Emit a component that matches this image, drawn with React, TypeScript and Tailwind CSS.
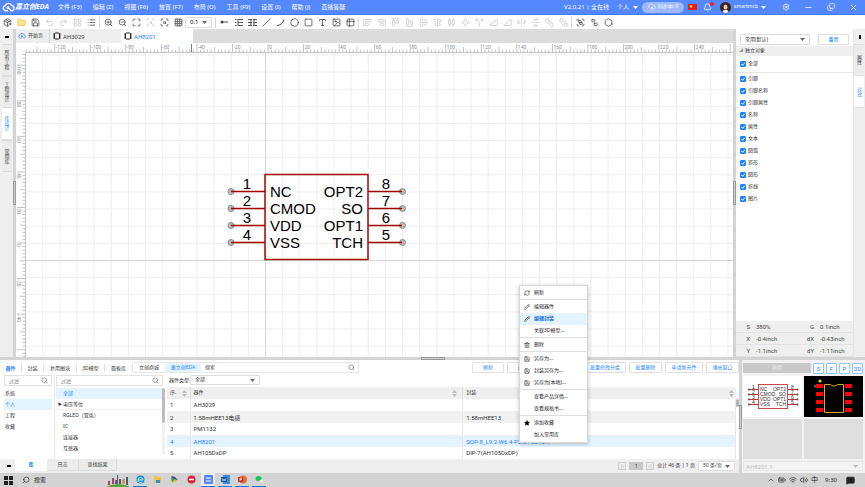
import React from "react";
import {
  AlignCenterHorizontal, AlignCenterVertical, AlignEndHorizontal, AlignEndVertical, AlignHorizontalDistributeCenter,
  AlignStartHorizontal, AlignStartVertical, BatteryFull, Bell, BringToFront, ChevronUp, Circle,
  CloudUpload, Component, Copy, FlipHorizontal2, FlipVertical2, Folder, Grid3x3, Group, Hexagon, Image as ImageIcon,
  LayoutGrid, List, Maximize, MessageSquareText, Minus, PackagePlus, Pencil, Redo2, RefreshCw, Save, ScanSearch, Search,
  SendToBack, Settings, Slash, Split, Square, Star, Table2, Trash2, TriangleRight, Type, Undo2, Ungroup,
  Volume2, Wifi, X, ZoomIn, ZoomOut,
} from "lucide-react";

type IconType = React.ComponentType<{ size?: number; strokeWidth?: number; className?: string }>;

const uiFont = "font-['Noto_Sans','Noto_Sans_CJK_SC',sans-serif]";
const latin = "font-['Roboto','Noto_Sans_CJK_SC',sans-serif] text-[6px]";

function PinIcon() {
  return (
    <svg width="8" height="8" viewBox="0 0 8 8" aria-hidden="true">
      <circle cx="2" cy="4" r="1.5" fill="#444" />
      <path d="M2 4h6" stroke="#444" />
    </svg>
  );
}

function PinRows() {
  return (
    <svg width="9" height="9" viewBox="0 0 9 9" aria-hidden="true">
      <path d="M1 1.5h1.5M1 4.5h1.5M1 7.5h1.5M4 1.5h5M4 4.5h5M4 7.5h5M4 1v7" stroke="#555" />
    </svg>
  );
}

function PinCols() {
  return (
    <svg width="9" height="9" viewBox="0 0 9 9" aria-hidden="true">
      <path d="M0 1.5h4M0 4.5h4M0 7.5h4M5 1.5h4M5 4.5h4M5 7.5h4M3 1v7M6 1v7" stroke="#555" />
    </svg>
  );
}

function ArcIcon() {
  return (
    <svg width="9" height="9" viewBox="0 0 9 9" aria-hidden="true">
      <path d="M1 7.5Q6.500 7 8 1.500" stroke="#444" fill="none" />
    </svg>
  );
}

function ChipIcon() {
  return (
    <svg width="8" height="8" viewBox="0 0 8 8" aria-hidden="true">
      <rect x="1.500" y="1" width="5" height="6" rx="1" fill="none" stroke="#222" />
      <path d="M0 2h1.500M0 4h1.500M0 6h1.500M6.500 2H8M6.500 4H8M6.500 6H8" stroke="#222" strokeWidth=".8" />
    </svg>
  );
}

function CloudLogo({ size, color }: { size: number; color: string }) {
  return (
    <svg width={size} height={size} viewBox="0 0 12 12" fill="none" stroke={color} strokeWidth="1.300" strokeLinecap="round" aria-hidden="true">
      <path d="M5 9H3.200A2.400 2.400 0 0 1 3 4.300 3.200 3.200 0 0 1 9 4.200 2.500 2.500 0 0 1 9.500 9H8.500L6 6.500" />
      <circle cx="5.500" cy="6.200" r=".7" />
    </svg>
  );
}

function Caret({ className = "" }: { className?: string }) {
  return (
    <svg width="5" height="3" viewBox="0 0 5 3" className={className} aria-hidden="true">
      <path d="M0 0h5L2.500 3z" fill="currentColor" />
    </svg>
  );
}

function Tool({ icon: Icon, label, className = "text-[#444]" }: { icon: IconType; label: string; className?: string }) {
  return (
    <button aria-label={label} className={`flex h-[14px] w-[14px] shrink-0 items-center justify-center ${className}`}>
      <Icon size={9} strokeWidth={2} />
    </button>
  );
}

function Picker({ label, value, className }: { label: string; value: string; className: string }) {
  return (
    <span className={`relative flex items-center rounded-[1px] border border-[#dcdcdc] bg-white ${className}`}>
      <select aria-label={label} className="h-full w-full appearance-none bg-transparent pl-1 outline-none">
        <option>{value}</option>
      </select>
      <Caret className="pointer-events-none absolute right-1 text-[#666]" />
    </span>
  );
}

const menus = ["文件 (F3)", "编辑 (Z)", "视图 (F6)", "放置 (F7)", "布局 (O)", "工具 (F9)", "设置 (I)", "帮助 (J)", "直播答疑"];

function TitleBar() {
  return (
    <header className="flex h-[15px] shrink-0 items-center border-b border-[#4377ee] bg-[#5588ff] text-[6px] text-white">
      <div className="flex w-[53px] items-center pl-[2px]">
        <CloudLogo size={13} color="#fff" />
        <span className="text-[7px] font-bold italic">嘉立创EDA</span>
      </div>
      <nav className="ml-[5px] flex gap-[11px]">
        {menus.map((m) => <button key={m}>{m}</button>)}
      </nav>
      <div className="ml-auto flex items-center">
        <span>V2.0.21 | 全在线</span>
        <button className="ml-2 flex items-center gap-1">个人 <Caret /></button>
        <button className="ml-1 flex h-[11px] w-[42px] items-center justify-center gap-[2px] rounded-full bg-[#9dbaff] text-[5px]">
          <CloudUpload size={8} /> 同步中: 0
        </button>
        <span className="ml-1 flex h-[6px] w-[9px] items-start bg-[#e02020] pl-px text-[4px] leading-[5px] text-[#ffde00]">★</span>
        <button aria-label="通知" className="relative ml-[6px]">
          <Bell size={9} />
          <span className="absolute -top-px right-[-2px] h-[4px] w-[4px] rounded-full bg-[#ff1a1a]" />
        </button>
        <svg width="11" height="11" viewBox="0 0 11 11" className="ml-2" aria-hidden="true">
          <circle cx="5.500" cy="5.500" r="5.500" fill="#3a2522" />
          <ellipse cx="5.500" cy="5" rx="2" ry="2.500" fill="#f3c9ae" />
          <path d="M2.500 10c0-3 6-3 6 0a5.500 5.500 0 0 1-6 0z" fill="#f4f4f4" />
          <path d="M3 4c1-2 4-2 5 0L7 2.500H4z" fill="#3a2522" />
        </svg>
        <button className="ml-[3px] flex items-center gap-[3px]"><span className="text-[5px]">smartmcb</span> <Caret /></button>
        <button aria-label="设置" className="ml-4"><Settings size={8} /></button>
        <button aria-label="最小化" className="ml-[14px]"><Minus size={9} /></button>
        <button aria-label="还原" className="ml-[14px]"><Copy size={8} className="-scale-x-100 rotate-180" /></button>
        <button aria-label="关闭" className="mr-[7px] ml-[14px]"><X size={9} /></button>
      </div>
    </header>
  );
}

const Rule = () => <span className="mx-[1px] h-[11px] w-px shrink-0 bg-[#d8d8d8]" />;

function Toolbar() {
  const off = "text-[#c4c4c4]";
  const aligners: [IconType, string][] = [
    [AlignStartVertical, "左对齐"], [AlignEndVertical, "右对齐"], [AlignStartHorizontal, "顶部对齐"], [AlignEndHorizontal, "底部对齐"],
    [AlignCenterHorizontal, "水平居中"], [AlignCenterVertical, "垂直居中"], [AlignHorizontalDistributeCenter, "水平分布"],
    [Component, "等距分布"], [Split, "网格分布"], [TriangleRight, "左旋转"], [TriangleRight, "右旋转"],
    [FlipHorizontal2, "水平翻转"], [FlipVertical2, "垂直翻转"], [BringToFront, "置于顶层"], [SendToBack, "置于底层"],
  ];
  return (
    <div className="flex h-[14px] shrink-0 items-center bg-white" role="toolbar">
      <Tool icon={PackagePlus} label="新建" />
      <button aria-label="打开" className="flex w-[14px] justify-center"><Folder size={9} className="fill-[#ffe58a] text-[#e8c04a]" /></button>
      <Tool icon={Save} label="保存" />
      <Tool icon={Undo2} label="撤销" className={off} />
      <Tool icon={Redo2} label="重做" className={off} />
      <Tool icon={LayoutGrid} label="阵列" className={off} />
      <Tool icon={List} label="查找" />
      <Rule />
      <Tool icon={ZoomIn} label="放大" />
      <Tool icon={ZoomOut} label="缩小" />
      <Tool icon={Maximize} label="适合全部" />
      <Tool icon={ScanSearch} label="适合选中" className={off} />
      <Tool icon={ScanSearch} label="适合区域" />
      <Tool icon={Grid3x3} label="网格" />
      <Picker label="网格尺寸" value="0.1" className="h-[11px] w-[27px] text-[6px]" />
      <span className="w-[2px]" />
      <Rule />
      <Tool icon={PinIcon} label="引脚" />
      <Tool icon={PinRows} label="引脚列表" />
      <Tool icon={PinCols} label="引脚阵列" />
      <Tool icon={Slash} label="折线" />
      <Tool icon={ArcIcon} label="圆弧" />
      <Tool icon={Circle} label="圆形" />
      <Tool icon={Square} label="矩形" />
      <Tool icon={Type} label="文本" />
      <Tool icon={ImageIcon} label="图片" />
      <Tool icon={Table2} label="表格" />
      <Rule />
      {aligners.map(([icon, label]) => <Tool key={label} icon={icon} label={label} className={off} />)}
      <Rule />
      <Tool icon={Group} label="符号向导" />
      <Tool icon={Ungroup} label="检查" />
      <Tool icon={Hexagon} label="设置" />
    </div>
  );
}

function SideTabs({ tabs, active }: { tabs: string[]; active: string }) {
  return (
    <div className="flex w-[10px] flex-col">
      {tabs.map((t) => (
        <button
          key={t}
          className={`flex h-8 w-[10px] items-center justify-center border-b border-[#dcdcdc] text-[5px] leading-[10px] [writing-mode:vertical-rl] ${t === active ? "bg-white text-[#1a85ff]" : "border-x bg-[#ececec] text-[#333]"}`}
        >
          {t}
        </button>
      ))}
    </div>
  );
}

function Splitter() {
  return (
    <div className="flex w-[3px] shrink-0 items-center bg-[#d4d4d4]">
      <button aria-label="折叠" className="h-[24px] w-[3px] border border-[#999] bg-[#d8d0d0]" />
    </div>
  );
}

const step = 35.55;
const pins = [
  { y: 191, l: "NC", r: "OPT2", a: "1", b: "8" },
  { y: 208, l: "CMOD", r: "SO", a: "2", b: "7" },
  { y: 225, l: "VDD", r: "OPT1", a: "3", b: "6" },
  { y: 242, l: "VSS", r: "TCH", a: "4", b: "5" },
];

function Canvas() {
  const xs = Array.from({ length: 220 }, (_, i) => i - 68);
  const ys = Array.from({ length: 130 }, (_, i) => i - 60);
  return (
    <svg className="block h-full w-full bg-white" role="img" aria-label="AH8201 符号">
      <defs>
        <pattern id="grid" x="265" y="260" width="17.130" height="17.130" patternUnits="userSpaceOnUse">
          <path d="M.5 0V17.130M0 .5H17.130" stroke="#eeeeee" />
        </pattern>
      </defs>
      <g transform="translate(-16 -43)">
        <rect x="25" y="52" width="3000" height="2000" fill="url(#grid)" />
        <path d="M265.500 52V2000M25 260.500H3000" stroke="#d6d6d6" />
        <path d="M25.500 2000V52.500H3000" stroke="#c4c4c4" fill="none" />
        <g stroke="#aeb4ba" strokeWidth=".8">
          {xs.map((i) => {
            const x = 268 + (i * step) / 10;
            return x > 26 ? <path key={i} d={`M${x} 52v${i % 10 === 0 ? -8 : i % 5 === 0 ? -5 : -2.5}`} /> : null;
          })}
          {ys.map((i) => {
            const y = 243 + (i * step) / 10;
            return y > 53 ? <path key={i} d={`M25 ${y}h${i % 10 === 0 ? -8 : i % 5 === 0 ? -5 : -2.5}`} /> : null;
          })}
        </g>
        <g fill="#8a929a" className="font-['Roboto',sans-serif] text-[5px]">
          {xs.filter((i) => i % 10 === 0 && i >= -60 && i <= 120).map((i) => (
            <text key={i} x={269 + (i * step) / 10} y="49">{i * 2}</text>
          ))}
          {ys.filter((i) => i % 10 === 0 && i >= -50 && i <= 20).map((i) => (
            <text key={i} transform={`translate(17 ${244 + (i * step) / 10}) rotate(90)`}>{-i * 2}</text>
          ))}
        </g>
        <path d="M191.500 44v8" stroke="#3b8fdc" />
        <g className="font-['Liberation_Sans',sans-serif] text-[15px]" fill="#000">
          {pins.map((p) => (
            <g key={p.a}>
              <circle cx="231" cy={p.y + 0.5} r="3" fill="#bbb" stroke="#8a8a8a" />
              <circle cx="402.500" cy={p.y + 0.5} r="3" fill="#bbb" stroke="#8a8a8a" />
              <path d={`M231 ${p.y + 0.5}h34M368 ${p.y + 0.5}h34`} stroke="#a00000" strokeWidth="1.500" />
              <text x="270" y={p.y + 6}>{p.l}</text>
              <text x="363" y={p.y + 6} textAnchor="end">{p.r}</text>
              <text x="247" y={p.y - 2} textAnchor="middle">{p.a}</text>
              <text x="386" y={p.y - 2} textAnchor="middle">{p.b}</text>
            </g>
          ))}
        </g>
        <rect x="265" y="174.500" width="103" height="85" fill="none" stroke="#a80808" strokeWidth="1.500" />
      </g>
    </svg>
  );
}

function DocTabs() {
  return (
    <div className="flex h-[14px] shrink-0 bg-[#dcdcdc] text-[#444]">
      <button className="flex w-[34px] items-center gap-[2px] border-r border-[#d0d0d0] bg-[#eeeeee] pl-[2px] text-[5px]">
        <CloudLogo size={8} color="#5588ff" /> 开始页
      </button>
      <button className={`flex w-[71px] items-center gap-[2px] bg-[#eeeeee] pl-[3px] ${latin}`}><ChipIcon /> AH3029</button>
      <button className={`flex w-[72px] items-center gap-[2px] bg-white pl-[3px] text-[#1a85ff] ${latin}`}><ChipIcon /> AH8201</button>
    </div>
  );
}

function Check({ label }: { label: string }) {
  return (
    <label className="flex h-[12px] items-center gap-[2px]">
      <span className="relative flex h-[6px] w-[6px]">
        <input type="checkbox" defaultChecked className="h-[6px] w-[6px] appearance-none rounded-[1px] border border-[#1a85ff] checked:bg-[#1a85ff]" />
        <svg viewBox="0 0 6 6" className="pointer-events-none absolute inset-0" aria-hidden="true">
          <path d="M1.300 3l1.300 1.300L4.800 1.700" stroke="#fff" fill="none" />
        </svg>
      </span>
      {label}
    </label>
  );
}

const kinds = ["引脚", "引脚名称", "引脚属性", "名称", "属性", "文本", "圆弧", "矩形", "圆形", "折线", "图片"];
const readout = [["S", "380%", "G", "0.1inch"], ["X", "-0.4inch", "dX", "-0.43inch"], ["Y", "-1.1inch", "dY", "-1.11inch"]];

function FilterPanel() {
  return (
    <aside className="flex w-[129px] shrink-0 bg-white text-[5px] text-[#333]">
      <div className="flex flex-1 flex-col">
        <div className="flex items-center justify-between px-1 pt-[5px] pb-px">
          <Picker label="过滤方案" value="常用(默认)" className="h-[11px] w-[70px]" />
          <button className="h-[11px] w-[31px] border border-[#e0e0e0] text-[#1a85ff]">重置</button>
        </div>
        <h2 className="flex h-[10px] items-center gap-[2px] bg-[#efefef] pl-[3px]">
          <span className="text-[4px] text-[#999]">◢</span>独立对象
        </h2>
        <div className="border-b border-[#e6e6e6] py-[2px] pl-1"><Check label="全部" /></div>
        <div className="pl-1">{kinds.map((k) => <Check key={k} label={k} />)}</div>
        <dl className="mt-auto bg-[#efefef]">
          {readout.map((r) => (
            <div key={r[0]} className={`grid h-[12px] grid-cols-[14px_40px_16px_1fr] items-center gap-x-[4px] border-b border-[#e2e2e2] leading-[11px] text-[#444] ${latin}`}>
              <dt className="text-right">{r[0]}</dt><dd className="pl-[2px]">{r[1]}</dd>
              <dt className="text-right">{r[2]}</dt><dd className="pl-[2px]">{r[3]}</dd>
            </div>
          ))}
        </dl>
      </div>
      <div className="w-[12px] border-l border-[#e4e4e4] bg-[#efefef]">
        <button aria-label="固定" className="flex h-[15px] w-[12px] items-center justify-center"><span className="h-[4px] w-[2px] bg-black" /></button>
        <SideTabs tabs={["属性", "过滤"]} active="过滤" />
      </div>
    </aside>
  );
}

function FilterBox({ label, className }: { label: string; className: string }) {
  return (
    <div className={`flex h-[11px] items-center border border-[#e2e2e2] bg-white pr-[3px] ${className}`}>
      <input aria-label={label} placeholder={label} className="h-full w-full min-w-0 pl-1 outline-none placeholder:text-[#777]" />
      <Search size={7} className="shrink-0 text-[#666]" />
    </div>
  );
}

function Sort() {
  return (
    <svg width="5" height="7" viewBox="0 0 5 7" aria-hidden="true">
      <path d="M0 3L2.500 0 5 3zM0 4h5L2.500 7z" fill="#bcbcbc" />
    </svg>
  );
}

const parts = [["1", "AH3029", ""], ["2", "1.58mHEE13电感", "1.58mHEE13"], ["3", "PM1132", ""], ["4", "AH8201", "SOP-8_L9.2-W6.4-P2.54-LS10.1"], ["5", "AH105DxDP", "DIP-7(AH105DxDP)"]];
const libTabs: [string, string][] = [["器件", "w-[22px] font-bold text-[#1a85ff]"], ["封装", "w-[22px]"], ["复用图块", "w-[33px]"], ["3D模型", "w-[28px]"], ["面板库", "w-[28px]"]];
const actions: [string, string][] = [["刷新", "w-[32px] text-center"], ["最近使用", "w-[74px] pl-[10px] text-left"], ["批量修改分类", "w-[42px] text-center"], ["批量删除", "w-[33px] text-center"], ["申请新元件", "w-[38px] text-center"], ["弹出窗口", "w-[33px] text-center"]];

function Library() {
  return (
    <section className="flex min-w-0 flex-1 flex-col bg-white text-[5px] text-[#333]">
      <div className="flex h-[15px] shrink-0 items-center">
        {libTabs.map(([t, c]) => <button key={t} className={`h-[8px] border-r border-[#e0e0e0] leading-[8px] ${c}`}>{t}</button>)}
        <div className="flex h-[11px] w-[226px] items-center border border-l-0 border-[#e6e6e6] pr-[3px]">
          <button className="w-[32px] shrink-0">立创商城</button>
          <button className="h-full w-[36px] shrink-0 bg-[#e3f3ff] text-[#1a85ff]">嘉立创EDA</button>
          <input aria-label="搜索" placeholder="搜索" className="min-w-0 flex-1 pl-1 outline-none placeholder:text-[#444]" />
          <Search size={7} className="text-[#666]" />
        </div>
        <div className="ml-auto flex gap-[3px]">
          {actions.map(([t, c]) => <button key={t} className={`h-[11px] rounded-[1px] border border-[#e0e0e0] leading-[9px] text-[#1a85ff] ${c}`}>{t}</button>)}
        </div>
      </div>
      <div className="flex min-h-0 flex-1">
        <div className="w-[55px] shrink-0 border-r border-[#e8e8e8] pr-[2px] pl-1">
          <FilterBox label="过滤" className="mb-[2px]" />
          <ul className="leading-[11px]">
            {["系统", "个人", "工程", "收藏"].map((t) => <li key={t} className={`pl-[1px] ${t === "个人" ? "bg-[#e3f3ff] text-[#1a85ff]" : ""}`}>{t}</li>)}
          </ul>
        </div>
        <div className="w-[112px] shrink-0 pr-[2px] pl-[1px]">
          <FilterBox label="过滤" className="mr-[2px] mb-[2px]" />
          <div className="flex">
            <ul className="flex-1 leading-[11px]">
              {["全部", "电压等位", "RGLED（双色）", "IC", "连接器", "互感器"].map((t, i) => (
                <li key={t} className={`flex h-[11px] items-center ${i === 0 ? "bg-[#e3f3ff] text-[#1a85ff]" : ""} ${i === 1 ? "border-b border-[#eee]" : ""}`}>
                  <span className="w-[7px] pl-[2px] text-[4px]">{i === 1 ? "▶" : ""}</span>{t}
                </li>
              ))}
            </ul>
            <div className="w-[3px] bg-[#f1f1f1]"><div className="h-[35px] rounded-full bg-[#bdbdbd]" /></div>
          </div>
        </div>
        <div className="flex min-w-0 flex-1 flex-col overflow-hidden">
          <div className="flex h-[12px] shrink-0 items-start gap-px pl-[2px]">
            <span className="leading-[10px]">器件类型</span>
            <Picker label="器件类型" value="全部" className="h-[10px] w-[70px]" />
          </div>
          <div className="flex min-h-0 flex-1">
            <table className="w-full table-fixed border-collapse text-left">
              <thead>
                <tr className="h-[12px] bg-[#efefef]">
                  <th className="w-[23px] border-r border-[#e0e0e0] px-[3px] py-0 font-normal"><div className="flex items-center justify-between">序. <Sort /></div></th>
                  <th className="border-r border-[#e0e0e0] py-0 pr-[5px] pl-[3px] font-normal"><div className="flex items-center justify-between">器件 <Sort /></div></th>
                  <th className="py-0 pr-[2px] pl-[3px] font-normal"><div className="flex items-center justify-between">封装 <Sort /></div></th>
                </tr>
              </thead>
              <tbody className={latin}>
                {parts.map((p, i) => (
                  <tr key={p[0]} className={`h-[12px] leading-[11px] ${i === 3 ? "bg-[#e3f3ff] text-[#1a85ff]" : i === 1 ? "bg-[#f1f1f1]" : "border-b border-[#eee]"}`}>
                    {p.map((c, j) => <td key={j} className="truncate border-r border-[#e8e8e8] py-0 pl-[3px]">{c}</td>)}
                  </tr>
                ))}
              </tbody>
            </table>
            <div className="w-[3px] shrink-0 pt-[12px]"><div className="h-2 rounded-full bg-[#b5b5b5]" /></div>
          </div>
        </div>
      </div>
      <footer className="flex h-[14px] shrink-0 items-center bg-[#efefef]">
        <button aria-label="收起" className="w-[15px] pl-[7px]"><span className="block h-[2px] w-[4px] bg-black" /></button>
        <button className="h-[12px] w-[32px] self-start bg-white font-bold text-[#1a85ff]">库</button>
        <button className="h-[12px] w-[32px] self-start border-r border-b border-[#dcdcdc] bg-[#ececec]">日志</button>
        <button className="h-[12px] w-[38px] self-start border-r border-b border-[#dcdcdc] bg-[#ececec]">查找结果</button>
        <div className="ml-auto flex items-center gap-[3px] pr-1">
          <button aria-label="首页" className="h-[8px] w-[8px] border border-[#ccc] leading-[5px] text-[#999]">|‹</button>
          <button className="h-[8px] w-[14px] bg-[#c8c8c8] leading-[8px]">1</button>
          <button aria-label="末页" className="h-[8px] w-[8px] border border-[#ccc] leading-[5px] text-[#999]">›|</button>
          <span>总计 46 条 | 1 页</span>
          <Picker label="每页条数" value="50 条/页" className="h-[10px] w-[37px]" />
        </div>
      </footer>
    </section>
  );
}

function SymbolPreview() {
  return (
    <svg viewBox="0 0 59 41" className="h-[41px] w-full bg-white" aria-label="符号预览" role="img">
      <rect x="15.500" y="8.500" width="29" height="24" fill="none" stroke="#c84a4a" />
      {pins.map((p, i) => {
        const y = 13 + i * 5;
        return (
          <g key={p.a} className="font-['Liberation_Sans',sans-serif] text-[5px]" fill="#333">
            <path d={`M6 ${y + 0.5}h9M45 ${y + 0.5}h9`} stroke="#b23a3a" />
            <circle cx="6" cy={y + 0.5} r="1" fill="#733" />
            <circle cx="54.500" cy={y + 0.5} r="1" fill="#733" />
            <text x="17" y={y + 2}>{p.l}</text>
            <text x="43" y={y + 2} textAnchor="end">{p.r}</text>
            <text x="9" y={y}>{p.a}</text>
            <text x="48" y={y}>{p.b}</text>
          </g>
        );
      })}
    </svg>
  );
}

function FootprintPreview() {
  return (
    <svg viewBox="0 0 59 41" className="h-[41px] w-full bg-black" aria-label="封装预览" role="img">
      {[8, 16, 24, 32].map((y) => (
        <g key={y} fill="#f00">
          <rect x="12" y={y} width="7" height="4" />
          <rect x="41" y={y} width="7" height="4" />
        </g>
      ))}
      <path d="M20.500 8.500h6a4 3 0 0 0 7 0h6v28h-19z" fill="none" stroke="#d6aa18" />
      <circle cx="16" cy="5" r="1.500" fill="#ffd800" />
      <path d="M10 10h2M11 9v3" stroke="#aaa" strokeWidth=".6" />
    </svg>
  );
}

function PreviewPanel() {
  return (
    <aside className="flex w-[123px] shrink-0 flex-col bg-[#f3f3f3] pr-[2px] pl-px text-[5px]">
      <div className="flex h-[16px] items-center gap-[2px]">
        <button disabled className="h-[10px] flex-1 bg-[#c9c9c9] text-[#eee]">放置</button>
        {["S", "F", "P", "3D"].map((t) => <button key={t} className={`h-[11px] w-[11px] rounded-[1px] border border-[#8cc8ff] bg-white leading-[9px] text-[#1a85ff] ${latin}`}>{t}</button>)}
      </div>
      <div className="grid grid-cols-2 gap-x-[2px] gap-y-[2px]">
        <SymbolPreview />
        <FootprintPreview />
        <div className="h-[40px] bg-[#dedede]" />
        <div className="h-[40px] bg-[#dedede]" />
      </div>
      <span className="relative mt-[2px] flex h-[10px] items-center border border-[#e6e6e6] text-[#bbb]">
        <select disabled aria-label="子部件" className={`w-full appearance-none pl-[2px] ${latin}`}><option>AH8201.1</option></select>
        <Caret className="absolute right-1" />
      </span>
    </aside>
  );
}

const context: { t: string; icon?: IconType; sep?: boolean; on?: boolean; fill?: boolean }[] = [
  { t: "刷新", icon: RefreshCw }, { t: "编辑器件", icon: Pencil, sep: true }, { t: "编辑封装", icon: Pencil, on: true }, { t: "关联3D模型..." },
  { t: "删除", icon: Trash2, sep: true }, { t: "另存为...", icon: Save, sep: true }, { t: "封装另存为...", icon: Save }, { t: "另存为(本地)...", icon: Save },
  { t: "查看产品详情...", sep: true }, { t: "查看规格书..." }, { t: "添加收藏", icon: Star, sep: true, fill: true }, { t: "加入常用库" },
];

function ContextMenu() {
  return (
    <div role="menu" className="absolute top-[285px] left-[519px] w-[69px] border border-[#d8d8d8] bg-white py-px text-[5px] text-[#222] shadow-[0_1px_4px_rgba(0,0,0,0.25)]">
      {context.map(({ t, icon: Icon, sep, on, fill }) => (
        <React.Fragment key={t}>
          {sep && <div className="h-[2px] border-t border-[#dedede]" />}
          <button role="menuitem" className={`flex h-[12px] w-full items-center ${on ? "bg-[#e3f3ff] font-bold text-[#1a6fd8]" : ""}`}>
            <span className="flex w-[14px] justify-center text-[#222]">{Icon && <Icon size={6} className={fill ? "fill-black" : ""} />}</span>
            {t}
          </button>
        </React.Fragment>
      ))}
    </div>
  );
}

function AppTile({ name, on, line = true, children }: { name: string; on?: boolean; line?: boolean; children: React.ReactNode }) {
  return (
    <button aria-label={name} className={`flex h-full w-[14px] items-center justify-center border-b ${on ? "bg-[#ebebeb]" : ""} ${line ? "border-[#1479d4]" : "border-transparent"}`}>
      <svg width="9" height="9" viewBox="0 0 9 9">{children}</svg>
    </button>
  );
}

function Taskbar() {
  return (
    <footer className="flex h-[14px] shrink-0 items-center bg-[#d3d3d3] text-[6px] text-[#222]">
      <button aria-label="开始" className="ml-1 grid grid-cols-2 gap-px">
        {[0, 1, 2, 3].map((i) => <span key={i} className="h-[4px] w-[4px] bg-[#222]" />)}
      </button>
      <button className="ml-[9px] flex items-center gap-1"><Search size={8} className="-scale-x-100" /> 搜索</button>
      <svg width="26" height="13" viewBox="0 0 26 13" className="ml-[59px]" aria-hidden="true">
        <path d="M1 13Q13 7 25 13z" fill="#57a639" />
        <path d="M3 11V7h2v4M7 10V4h2v6M10 10V6h2v4" fill="#9a4468" />
        <path d="M12 10V1h1v9M14 10V5h2v5M21 11V3h2v8" fill="#3a5b8c" />
        <path d="M17 10V6l2-2 1 2v4" fill="#d89b42" />
      </svg>
      <div className="ml-[2px] flex h-full gap-[3px]">
        <AppTile name="Edge"><circle cx="4.500" cy="4.500" r="4" fill="#168bd2" /><path d="M2 5h5a2.500 2.500 0 0 0-5 0 2.500 2.500 0 0 0 4 2" stroke="#c8f2ff" fill="none" /></AppTile>
        <AppTile name="资源管理器" line={false}><path d="M1 1h3l1 1h3v6H1z" fill="#f6c442" /><path d="M3 5h4v3H3z" fill="#2d91d8" /></AppTile>
        <AppTile name="工具" line={false}><path d="M1 1l4 1 3 3-4 1z" fill="#264d9b" /><path d="M3 8l1-4 4 1z" fill="#eab821" /><path d="M1 2l3 2-2 4z" fill="#3c9c52" /></AppTile>
        <AppTile name="录屏" line={false}><circle cx="4.500" cy="4.500" r="4" fill="#da2435" /><path d="M2 4.500h5" stroke="#fff" strokeWidth="1.500" /></AppTile>
        <AppTile name="嘉立创EDA" on><rect width="9" height="9" rx="1" fill="#5588ff" /><path d="M2 3h5M2 6h5" stroke="#fff" /></AppTile>
        <AppTile name="Word"><rect x="2" width="7" height="9" fill="#3d8fdb" /><rect y="2" width="6" height="5" fill="#174d9b" /><path d="M1 3l1 3 1-2 1 2 1-3" stroke="#fff" fill="none" strokeWidth=".6" /></AppTile>
        <AppTile name="PowerPoint"><circle cx="5" cy="4.500" r="4" fill="#e46a42" /><rect y="2" width="5" height="5" fill="#b83b1d" /><path d="M2 6V3h1.500v1.500H2" stroke="#fff" fill="none" strokeWidth=".6" /></AppTile>
        <AppTile name="微信"><ellipse cx="3.500" cy="3.500" rx="3" ry="2.500" fill="#16c45b" /><ellipse cx="6.500" cy="6" rx="2" ry="1.500" fill="#eee" /></AppTile>
      </div>
      <div className="mr-[10px] ml-auto flex items-center gap-[3px]">
        <ChevronUp size={8} /><BatteryFull size={8} /><Wifi size={8} /><Volume2 size={8} />
        <span className="text-[7px]">中</span>
        <time className="ml-1">9:30</time>
        <MessageSquareText size={9} className="ml-[6px] fill-[#222] stroke-[#222]" />
      </div>
    </footer>
  );
}

export default function App() {
  return (
    <div className={`relative flex h-screen flex-col overflow-hidden bg-[#efefef] ${uiFont}`}>
      <TitleBar />
      <Toolbar />
      <main className="flex min-h-0 flex-1">
        <aside className="flex w-[13px] shrink-0 flex-col items-center bg-[#efefef]">
          <button aria-label="固定" className="flex h-[15px] items-center"><span className="h-[2px] w-[4px] bg-black" /></button>
          <SideTabs tabs={["所有工程", "工程设计", "库设计", "常用库"]} active="库设计" />
        </aside>
        <Splitter />
        <div className="flex min-w-0 flex-1 flex-col">
          <DocTabs />
          <div className="min-h-0 flex-1"><Canvas /></div>
        </div>
        <Splitter />
        <FilterPanel />
      </main>
      <div className="flex h-[3px] shrink-0 justify-center bg-[#d4d4d4]">
        <button aria-label="折叠" className="h-[3px] w-[24px] border border-[#999] bg-[#d8d0d0]" />
      </div>
      <div className="flex h-[113px] shrink-0">
        <Library />
        <Splitter />
        <PreviewPanel />
      </div>
      <Taskbar />
      <ContextMenu />
    </div>
  );
}
